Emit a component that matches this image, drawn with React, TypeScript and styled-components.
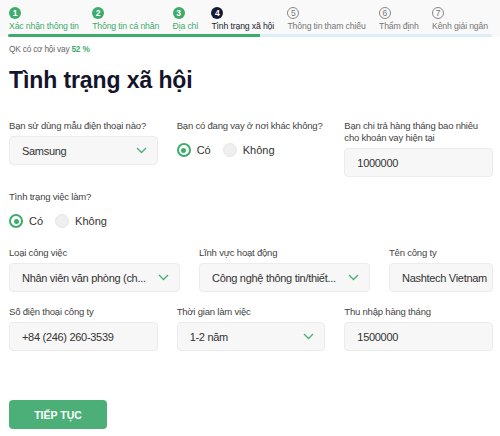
import React, { useState } from "react";
import styled, { createGlobalStyle, css } from "styled-components";

const GREEN = "#3eac6c";

const GlobalStyle = createGlobalStyle`
	body {
		margin: 0;
		background: #fff;
		font-family: "Liberation Sans", Arial, sans-serif;
		color: #333;
	}
`;

type StepState = "done" | "active" | "todo";

const Page = styled.div`
	width: 500px;
	height: 436px;
	overflow: hidden;
`;

const Header = styled.div`
	background: #f9f9f9;
	padding: 7px 8px 0 8px;
`;

const Steps = styled.div`
	display: flex;
	justify-content: space-between;
	padding: 0 4px 0 1px;
`;

const Step = styled.div`
	display: flex;
	flex-direction: column;
	align-items: flex-start;
`;

const StepDot = styled.div<{ $state: StepState }>`
	width: 12px;
	height: 12px;
	border-radius: 50%;
	box-sizing: border-box;
	display: flex;
	align-items: center;
	justify-content: center;
	font-size: 8.5px;
	font-weight: bold;
	line-height: 1;
	${({ $state }) =>
		$state === "done"
			? css`background: ${GREEN}; color: #fff;`
			: $state === "active"
			? css`background: #161a33; color: #fff;`
			: css`border: 1px solid #888; color: #777; font-weight: normal;`}
`;

const StepLabel = styled.div<{ $state: StepState }>`
	margin-top: 2px;
	font-size: 8.7px;
	line-height: 10px;
	letter-spacing: -0.15px;
	white-space: nowrap;
	color: ${({ $state }) => ($state === "done" ? GREEN : $state === "active" ? "#1b1b2b" : "#777")};
`;

const Bar = styled.div`
	margin-top: 3px;
	height: 3px;
	background: #dcedf9;
	border-radius: 2px;
	overflow: hidden;
`;

const BarFill = styled.div`
	height: 100%;
	background: ${GREEN};
`;

const Body = styled.div`
	padding: 0 7px 0 9px;
`;

const Chance = styled.div`
	margin-top: 7px;
	font-size: 8.3px;
	line-height: 10px;
	letter-spacing: -0.2px;
	color: #666;
	b {
		color: ${GREEN};
	}
`;

const Title = styled.h1`
	margin: 12px 0 0;
	font-size: 23px;
	line-height: 28px;
	font-weight: bold;
	color: #14142b;
	letter-spacing: -0.1px;
`;

const Row = styled.div<{ $cols: string; $top: number }>`
	display: grid;
	grid-template-columns: ${({ $cols }) => $cols};
	column-gap: 19px;
	margin-top: ${({ $top }) => $top}px;
	align-items: start;
`;

const Field = styled.div`
	display: flex;
	flex-direction: column;
	min-width: 0;
`;

const Label = styled.div`
	font-size: 9.5px;
	line-height: 12px;
	letter-spacing: -0.2px;
	color: #444;
	margin-bottom: 4px;
`;

const Box = styled.div`
	height: 29px;
	box-sizing: border-box;
	background: #f7f7f7;
	border: 1px solid #ececec;
	border-radius: 4px;
	padding: 0 10px 0 12px;
	display: flex;
	align-items: center;
	justify-content: space-between;
	font-size: 11px;
	letter-spacing: -0.3px;
	color: #333;
	white-space: nowrap;
`;

const BoxText = styled.span`
	white-space: nowrap;
`;

const Radios = styled.div`
	display: flex;
	align-items: center;
	gap: 12px;
	height: 16px;
	margin-top: 6px;
`;

const RadioItem = styled.label`
	display: flex;
	align-items: center;
	gap: 6px;
	font-size: 11px;
	color: #333;
	cursor: pointer;
`;

const RadioCircle = styled.span<{ $on: boolean }>`
	width: 14px;
	height: 14px;
	box-sizing: border-box;
	border-radius: 50%;
	display: flex;
	align-items: center;
	justify-content: center;
	${({ $on }) =>
		$on
			? css`
					border: 2px solid ${GREEN};
					background: #fff;
					&::after {
						content: "";
						width: 5px;
						height: 5px;
						border-radius: 50%;
						background: ${GREEN};
					}
			  `
			: css`
					border: 1px solid #e6e6e6;
					background: #efefef;
			  `}
`;

const Button = styled.button`
	display: block;
	margin-top: 49px;
	width: 98px;
	height: 29px;
	border: none;
	border-radius: 4px;
	background: #4caf78;
	color: #fff;
	font-family: "Liberation Sans", Arial, sans-serif;
	font-weight: bold;
	font-size: 10.5px;
	cursor: pointer;
`;

const Chevron = () => (
	<svg width="11" height="7" viewBox="0 0 11 7" fill="none">
		<path d="M1 1l4.5 4.5L10 1" stroke="#4caf78" strokeWidth="1.3" />
	</svg>
);

const steps = [
	"Xác nhận thông tin",
	"Thông tin cá nhân",
	"Địa chỉ",
	"Tình trạng xã hội",
	"Thông tin tham chiếu",
	"Thẩm định",
	"Kênh giải ngân",
];

const Radio = ({ value, onChange }: { value: boolean; onChange: (v: boolean) => void }) => (
	<Radios>
		<RadioItem onClick={() => onChange(true)}>
			<RadioCircle $on={value} />
			Có
		</RadioItem>
		<RadioItem onClick={() => onChange(false)}>
			<RadioCircle $on={!value} />
			Không
		</RadioItem>
	</Radios>
);

const Select = ({ children }: { children: React.ReactNode }) => (
	<Box>
		<BoxText>{children}</BoxText>
		<Chevron />
	</Box>
);

export default function App() {
	const [loan, setLoan] = useState(true);
	const [job, setJob] = useState(true);
	const current = 4;
	const percent = 52;

	return (
		<Page>
			<GlobalStyle />
			<Header>
				<Steps>
					{steps.map((s, i) => {
						const state: StepState = i + 1 < current ? "done" : i + 1 === current ? "active" : "todo";
						return (
							<Step key={s}>
								<StepDot $state={state}>{i + 1}</StepDot>
								<StepLabel $state={state}>{s}</StepLabel>
							</Step>
						);
					})}
				</Steps>
				<Bar>
					<BarFill style={{ width: `${percent}%` }} />
				</Bar>
			</Header>
			<Body>
				<Chance>
					QK có cơ hội vay <b>{percent} %</b>
				</Chance>
				<Title>Tình trạng xã hội</Title>

				<Row $cols="1fr 1fr 1fr" $top={26}>
					<Field>
						<Label>Bạn sử dùng mẫu điện thoại nào?</Label>
						<Select>Samsung</Select>
					</Field>
					<Field>
						<Label>Bạn có đang vay ở nơi khác không?</Label>
						<Radio value={loan} onChange={setLoan} />
					</Field>
					<Field>
						<Label>Bạn chi trả hàng tháng bao nhiêu cho khoản vay hiện tại</Label>
						<Box>1000000</Box>
					</Field>
				</Row>

				<Row $cols="1fr" $top={14}>
					<Field>
						<Label>Tình trạng việc làm?</Label>
						<Radio value={job} onChange={setJob} />
					</Field>
				</Row>

				<Row $cols="171px 171px 1fr" $top={18}>
					<Field>
						<Label>Loại công việc</Label>
						<Select>Nhân viên văn phòng (ch...</Select>
					</Field>
					<Field>
						<Label>Lĩnh vực hoạt động</Label>
						<Select>Công nghệ thông tin/thiết...</Select>
					</Field>
					<Field>
						<Label>Tên công ty</Label>
						<Box>Nashtech Vietnam</Box>
					</Field>
				</Row>

				<Row $cols="1fr 1fr 1fr" $top={14}>
					<Field>
						<Label>Số điện thoại công ty</Label>
						<Box>+84 (246) 260-3539</Box>
					</Field>
					<Field>
						<Label>Thời gian làm việc</Label>
						<Select>1-2 năm</Select>
					</Field>
					<Field>
						<Label>Thu nhập hàng tháng</Label>
						<Box>1500000</Box>
					</Field>
				</Row>

				<Button>TIẾP TỤC</Button>
			</Body>
		</Page>
	);
}
